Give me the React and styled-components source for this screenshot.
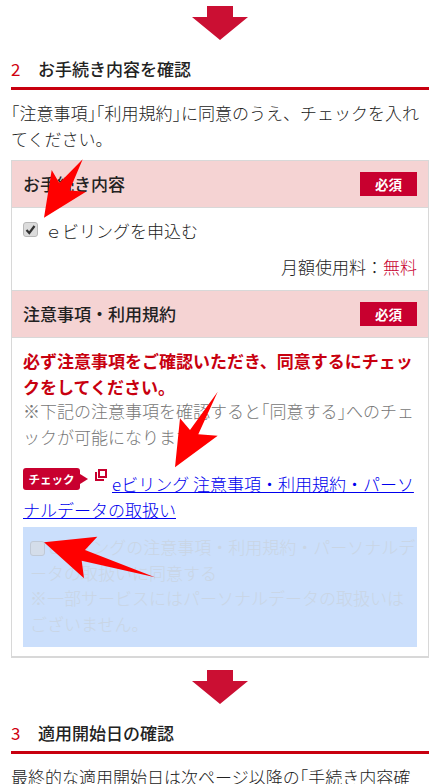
import React from 'react';
import styled, { createGlobalStyle } from 'styled-components';

const GlobalStyle = createGlobalStyle`
  html, body {
    margin: 0;
    padding: 0;
    background: #fff;
    overflow: hidden;
  }
  body {
    font-family: "Noto Sans CJK JP", "Noto Sans", sans-serif;
    font-weight: 300;
    font-size: 17px;
    color: #222;
  }
`;

const Page = styled.div`
  position: relative;
  width: 439px;
  height: 784px;
  overflow: hidden;
  padding: 6px 10px 0 11px;
  box-sizing: border-box;
`;

const DownArrowWrap = styled.div`
  display: flex;
  justify-content: center;
  height: 34px;
  margin-top: ${(p) => p.$top || 0}px;
`;

const Heading = styled.h2`
  display: flex;
  align-items: center;
  margin: 12px 0 0;
  height: 32px;
  padding-bottom: 3px;
  border-bottom: 3px solid #c8000f;
  font-size: 17px;
  font-weight: 500;
  color: #222;
`;

const HeadingNum = styled.span`
  color: #d0000f;
  width: 27px;
  font-size: 17px;
  font-weight: 400;
`;

const Lead = styled.p`
  margin: 10px 0 0;
  line-height: 26px;
`;

// half width corner brackets, as the reference font draws them
const Bracket = styled.span`
  font-feature-settings: "halt";
`;

const Card = styled.div`
  margin-top: 8px;
  border: 1px solid #d8d8d8;
  border-bottom-width: 2px;
`;

const CardHead = styled.div`
  display: flex;
  align-items: center;
  justify-content: space-between;
  height: 46px;
  padding: 0 11px;
  background: #f5d3d3;
  border-bottom: 1px solid #d8d8d8;
  border-top: ${(p) => (p.$ruled ? '1px solid #d8d8d8' : 'none')};
  font-weight: 500;
  color: #222;
`;

const HeadTitle = styled.span`
  position: relative;
  top: -1px;
`;

const Required = styled.span`
  display: flex;
  align-items: center;
  justify-content: center;
  width: 57px;
  height: 24px;
  background: #c8002f;
  color: #fff;
  font-size: 13.5px;
  font-weight: 700;
`;

const CheckRow = styled.label`
  display: flex;
  align-items: flex-start;
  gap: 7px;
  padding: 12px 11px 0;
  height: 24px;
  line-height: 22px;
`;

const Box = styled.span`
  box-sizing: border-box;
  flex: none;
  display: flex;
  align-items: center;
  justify-content: center;
  width: 15px;
  height: 15px;
  margin-top: 2px;
  border-radius: 3px;
  border: 1px solid #b8b8b8;
  background: #dcdcdc;
  opacity: ${(p) => (p.$faded ? 0.55 : 1)};
`;

const Fee = styled.p`
  margin: 0;
  padding: 10px 11px;
  text-align: right;
  line-height: 26px;
`;

const FeeFree = styled.span`
  color: #c8002f;
`;

const CardBody = styled.div`
  padding: 10px 0 9px 11px;
`;

const Warn = styled.p`
  margin: 0;
  padding-right: 11px;
  line-height: 25.5px;
  font-weight: 700;
  color: #c8000f;
`;

const Note = styled.p`
  margin: -1px 0 0;
  padding-right: 11px;
  line-height: 25.5px;
  color: #777;
`;

const LinkBlock = styled.p`
  margin: 19px 0 0;
  padding-right: 11px;
  line-height: 25.5px;
`;

const CheckTag = styled.span`
  position: relative;
  display: inline-flex;
  align-items: center;
  justify-content: center;
  width: 57px;
  height: 22px;
  margin-right: 15px;
  border-radius: 3px;
  background: #c8002f;
  color: #fff;
  font-size: 11.5px;
  font-weight: 700;
  vertical-align: 7px;
  line-height: 22px;

  &::after {
    content: '';
    position: absolute;
    left: 57px;
    top: 6px;
    border-left: 8px solid #c8002f;
    border-top: 5px solid transparent;
    border-bottom: 5px solid transparent;
  }
`;

const ExternalIcon = styled.svg`
  width: 12px;
  height: 12px;
  margin-right: 5px;
  vertical-align: 10px;
`;

const DocLink = styled.a`
  color: #0000ee;
  text-decoration: underline;
`;

const AgreeBox = styled.div`
  margin: 5px 11px 0 0;
  padding: 7px 0 11px 7px;
  background: #cbdffc;
  line-height: 25.5px;
  color: #c9d5e4;
`;

const AgreeBoxTick = styled(Box)`
  display: inline-flex;
  vertical-align: -2px;
  margin: 0 4px 0 0;
`;

const Overlay = styled.svg`
  position: absolute;
  left: 0;
  top: 0;
  pointer-events: none;
`;

function DownArrow() {
  return (
    <svg width="58" height="34" viewBox="0 0 58 34">
      <path d="M16 0H42V11H57L29 34L1 11H16Z" fill="#cb0f33" />
    </svg>
  );
}

export default function App() {
  return (
    <Page>
      <GlobalStyle />
      <DownArrowWrap>
        <DownArrow />
      </DownArrowWrap>

      <Heading>
        <HeadingNum>2</HeadingNum>お手続き内容を確認
      </Heading>
      <Lead>
        <Bracket>「</Bracket>注意事項<Bracket>」「</Bracket>利用規約<Bracket>」</Bracket>
        に同意のうえ、チェックを入れてください。
      </Lead>

      <Card>
        <CardHead>
          <HeadTitle>お手続き内容</HeadTitle>
          <Required>必須</Required>
        </CardHead>
        <CheckRow>
          <Box>
            <svg width="11" height="11" viewBox="0 0 11 11">
              <path d="M1.5 6L4.3 9L9.5 2" fill="none" stroke="#333" strokeWidth="2.2" />
            </svg>
          </Box>
          ｅビリングを申込む
        </CheckRow>
        <Fee>
          月額使用料：<FeeFree>無料</FeeFree>
        </Fee>
        <CardHead $ruled>
          <HeadTitle>注意事項・利用規約</HeadTitle>
          <Required>必須</Required>
        </CardHead>
        <CardBody>
          <Warn>必ず注意事項をご確認いただき、同意するにチェックをしてください。</Warn>
          <Note>
            ※下記の注意事項を確認すると<Bracket>「</Bracket>同意する<Bracket>」</Bracket>へのチェックが可能になります。
          </Note>
          <LinkBlock>
            <CheckTag>チェック</CheckTag>
            <ExternalIcon viewBox="0 0 12 12">
              <path d="M3 0H12V9H3ZM5 2V7H10V2Z" fill="#c8002f" fillRule="evenodd" />
              <path d="M0 3H2V10H9V12H0Z" fill="#c8002f" />
            </ExternalIcon>
            <DocLink href="#">eビリング 注意事項・利用規約・パーソナルデータの取扱い</DocLink>
          </LinkBlock>
          <AgreeBox>
            <AgreeBoxTick $faded />
            eビリングの注意事項・利用規約・パーソナルデータの取扱いに同意する
            <br />
            ※一部サービスにはパーソナルデータの取扱いはございません。
          </AgreeBox>
        </CardBody>
      </Card>

      <DownArrowWrap $top={12}>
        <DownArrow />
      </DownArrowWrap>
      <Heading>
        <HeadingNum>3</HeadingNum>適用開始日の確認
      </Heading>
      <Lead>
        最終的な適用開始日は次ページ以降の<Bracket>「</Bracket>手続き内容確認<Bracket>」</Bracket>画面でご確認ください。
      </Lead>

      <Overlay width="439" height="784" viewBox="0 0 439 784">
        <path d="M44 217.7L51.7 170L59.3 183L82.7 159.3L69.5 190.5L86 191.7Z" fill="#f00" />
        <path d="M175 467.3L180 418.3L190 430L217.7 391.7L198.3 434.3L217.7 435.7Z" fill="#f00" />
        <path d="M44 542.3L97.3 536.7L85 550L155 577.3L81.7 560.7L84 578.3Z" fill="#f00" />
      </Overlay>
    </Page>
  );
}
